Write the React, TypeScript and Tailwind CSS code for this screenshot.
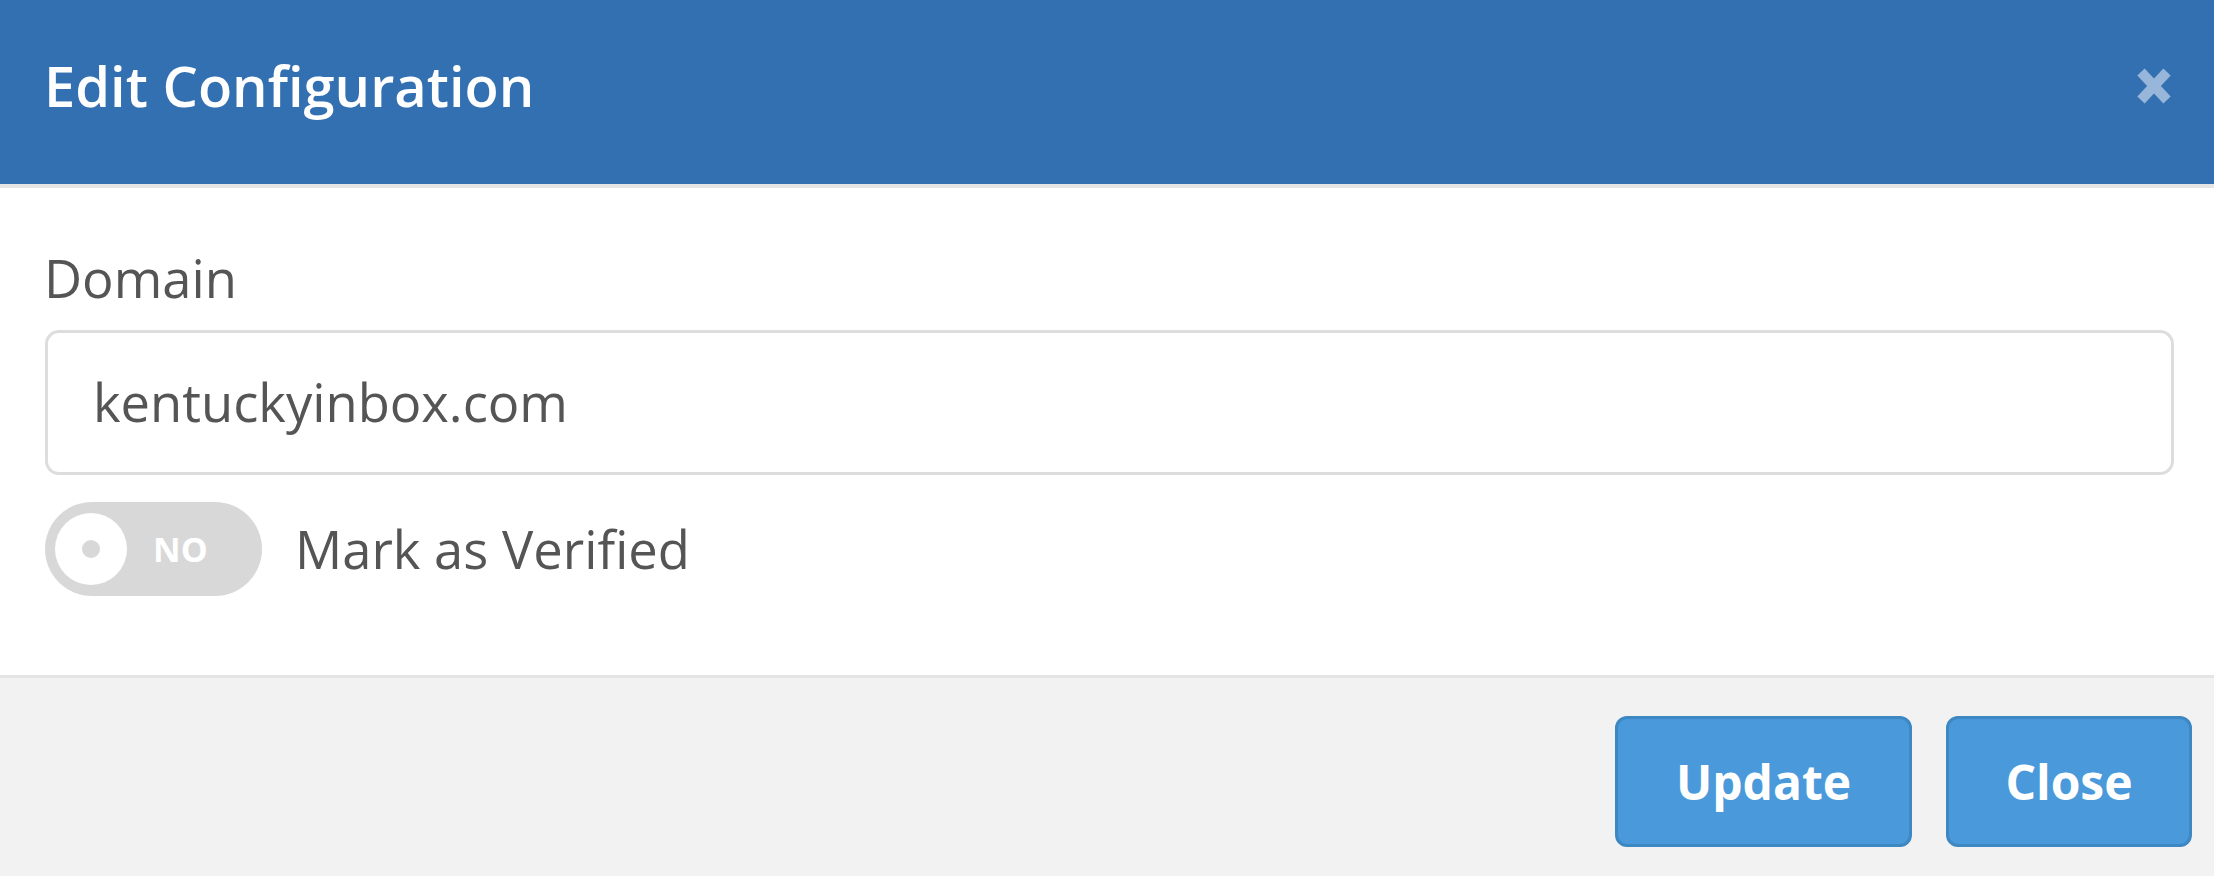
import React from 'react';

const font = { fontFamily: '"Open Sans", "Noto Sans", Arial, sans-serif' };

function CloseIcon() {
  return (
    <svg width="34" height="36" viewBox="0 0 34 36" className="mt-[68px] shrink-0">
      <g stroke="#97b6d9" strokeWidth="10" strokeLinecap="butt">
        <line x1="4" y1="4" x2="30" y2="32" />
        <line x1="30" y1="4" x2="4" y2="32" />
      </g>
    </svg>
  );
}

function Toggle() {
  return (
    <div className="flex h-[94px] w-[217px] shrink-0 items-center rounded-full bg-[#d8d8d8] pl-[10px]">
      <div className="flex h-[72px] w-[72px] items-center justify-center rounded-full bg-white">
        <div className="h-[18px] w-[18px] rounded-full bg-[#d8d8d8]" />
      </div>
      <span className="ml-[26px] text-[34px] font-bold text-white">NO</span>
    </div>
  );
}

export default function App() {
  return (
    <div className="flex h-[876px] w-[2214px] flex-col overflow-hidden bg-white" style={font}>
      {/* Header */}
      <div className="flex h-[184px] shrink-0 items-start justify-between bg-[#3370b2] pl-[44px] pr-[43px]">
        <h4 className="mt-[57px] text-[56px] font-semibold leading-[57px] text-white">
          Edit Configuration
        </h4>
        <CloseIcon />
      </div>

      {/* Body */}
      <div className="border-t-4 border-[#e5e5e5] pb-[79px] pl-[45px] pr-[40px] pt-[54px]">
        <label className="block text-[52.5px] text-[#555]" style={{ lineHeight: 'normal', marginLeft: '-1px' }}>
          Domain
        </label>
        <div className="mt-[17px] flex h-[145px] items-center rounded-[14px] border-[3px] border-[#dddddd] pl-[45px] text-[52.5px] text-[#555]">
          kentuckyinbox.com
        </div>
        <div className="mt-[27px] flex items-center gap-[33px]">
          <Toggle />
          <span className="text-[52.5px] text-[#555]">Mark as Verified</span>
        </div>
      </div>

      {/* Footer */}
      <div className="flex flex-1 items-start justify-end gap-[34px] border-t-[3px] border-[#e5e5e5] bg-[#f2f2f2] pr-[22px] pt-[38px]">
        <button className="flex h-[131px] w-[297px] items-center justify-center rounded-[12px] border-[3px] border-[#3d87c3] bg-[#4a9adb] text-[48px] font-bold text-white">
          Update
        </button>
        <button className="flex h-[131px] w-[246px] items-center justify-center rounded-[12px] border-[3px] border-[#3d87c3] bg-[#4a9adb] text-[48px] font-bold text-white">
          Close
        </button>
      </div>
    </div>
  );
}
